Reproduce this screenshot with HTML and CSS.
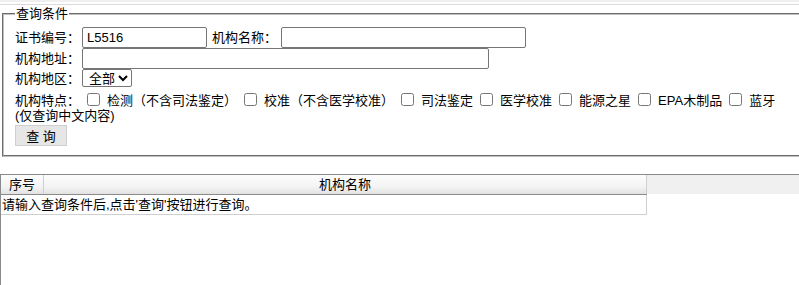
FILE: index.html
```html
<!DOCTYPE html>
<html lang="zh-CN">
<head>
<meta charset="utf-8">
<title>查询</title>
<link rel="stylesheet" href="styles.css">
</head>
<body>
<div class="topbar"></div>
<fieldset class="query">
  <legend>查询条件</legend>
  <div class="row">
    <span class="lbl">证书编号：</span><input class="txt w-cert" type="text" value="L5516"><span class="lbl lbl2">机构名称：</span><input class="txt w-name" type="text">
  </div>
  <div class="row">
    <span class="lbl">机构地址：</span><input class="txt w-addr" type="text">
  </div>
  <div class="row row-sel">
    <span class="lbl">机构地区：</span><select class="sel"><option>全部</option></select>
  </div>
  <div class="feats">
    <span class="lbl-f">机构特点：</span>
    <label class="chk"><input type="checkbox"><span>检测（不含司法鉴定）</span></label>
    <label class="chk"><input type="checkbox"><span>校准（不含医学校准）</span></label>
    <label class="chk"><input type="checkbox"><span>司法鉴定</span></label>
    <label class="chk"><input type="checkbox"><span>医学校准</span></label>
    <label class="chk"><input type="checkbox"><span>能源之星</span></label>
    <label class="chk"><input type="checkbox"><span>EPA木制品</span></label>
    <label class="chk"><input type="checkbox"><span>蓝牙</span></label>
  </div>
  <div class="note">(仅查询中文内容)</div>
  <button class="btn" type="button">查 询</button>
</fieldset>

<div class="grid">
  <div class="ghead">
    <div class="hcells">
      <div class="h-no">序号</div>
      <div class="h-name">机构名称</div>
    </div>
    <div class="hfill"></div>
  </div>
  <div class="grow">请输入查询条件后,点击'查询'按钮进行查询。</div>
</div>
</body>
</html>
```

FILE: styles.css
```css
html {
  overflow: hidden;
}
body {
  margin: 0;
  font-family: "Liberation Sans", "Noto Sans CJK SC", sans-serif;
  font-size: 13px;
  color: #000;
  background: #fff;
}
.topbar {
  height: 2px;
  border-top: 2px solid #f0f0f0;
  border-bottom: 1px solid #dadada;
}
.query {
  margin: 0 0 0 2px;
  width: 830px;
  border: 2px groove #c0c0c0;
  padding: 5px 11px 9px 11px;
  box-sizing: border-box;
}
.query legend {
  padding: 0 1px;
  line-height: 17px;
  height: 17px;
}
.row {
  display: flex;
  align-items: center;
  height: 21px;
}
.row-sel {
  align-items: flex-start;
}
.lbl {
  width: 67px;
  line-height: 21px;
  white-space: nowrap;
}
.row-sel .lbl {
  line-height: 18px;
  margin-top: 1px;
}
.lbl2 {
  width: 69px;
  margin-left: 5px;
}
.txt {
  box-sizing: border-box;
  height: 21px;
  border: 1px solid #767676;
  border-radius: 2px;
  padding: 1px 4px;
  font-family: "Liberation Sans", "Noto Sans CJK SC", sans-serif;
  font-size: 13px;
  color: #000;
  margin: 0;
}
.w-cert { width: 125px; }
.w-name { width: 245px; }
.w-addr { width: 407px; }
.sel {
  box-sizing: border-box;
  width: 50px;
  height: 18px;
  margin: 0;
  font-family: "Liberation Sans", "Noto Sans CJK SC", sans-serif;
  font-size: 13px;
  border: 1px solid #767676;
  border-radius: 2px;
  padding: 0 0 0 2px;
  background: #fff;
  color: #000;
}
.feats {
  display: flex;
  align-items: center;
  height: 18px;
  white-space: nowrap;
}
.lbl-f {
  width: 68px;
}
.chk {
  display: flex;
  align-items: center;
  margin-right: 1px;
}
.chk input {
  width: 13px;
  height: 13px;
  margin: 0 7px 0 4px;
}
.chk span {
  margin-right: 2px;
}
.note {
  line-height: 16px;
  height: 16px;
}
.btn {
  display: block;
  margin-top: 1px;
  width: 52px;
  height: 21px;
  padding: 0;
  background: #e6e6e6;
  border: 1px solid #cfcfcf;
  border-radius: 0;
  font-family: "Liberation Sans", "Noto Sans CJK SC", sans-serif;
  font-size: 13px;
  color: #000;
}
.grid {
  margin-top: 17px;
  border-top: 1px solid #8a8a8a;
  border-left: 1px solid #8a8a8a;
  height: 110px;
}
.ghead {
  display: flex;
  height: 20px;
}
.hcells {
  display: flex;
  width: 646px;
  height: 19px;
  border-bottom: 1px solid #8a8a8a;
  background: linear-gradient(#fdfdfd, #f4f4f4 60%, #e2e2e2);
}
.h-no {
  width: 42px;
  border-right: 1px solid #cfcfcf;
  text-align: center;
  line-height: 19px;
}
.h-name {
  flex: 1;
  border-right: 1px solid #cfcfcf;
  text-align: center;
  line-height: 19px;
}
.hfill {
  flex: 1;
  height: 19px;
  background: #f0f0f0;
}
.grow {
  box-sizing: border-box;
  width: 646px;
  height: 20px;
  line-height: 19px;
  padding-left: 1px;
  border-right: 1px solid #cfcfcf;
  border-bottom: 1px solid #cfcfcf;
  white-space: nowrap;
}
```
